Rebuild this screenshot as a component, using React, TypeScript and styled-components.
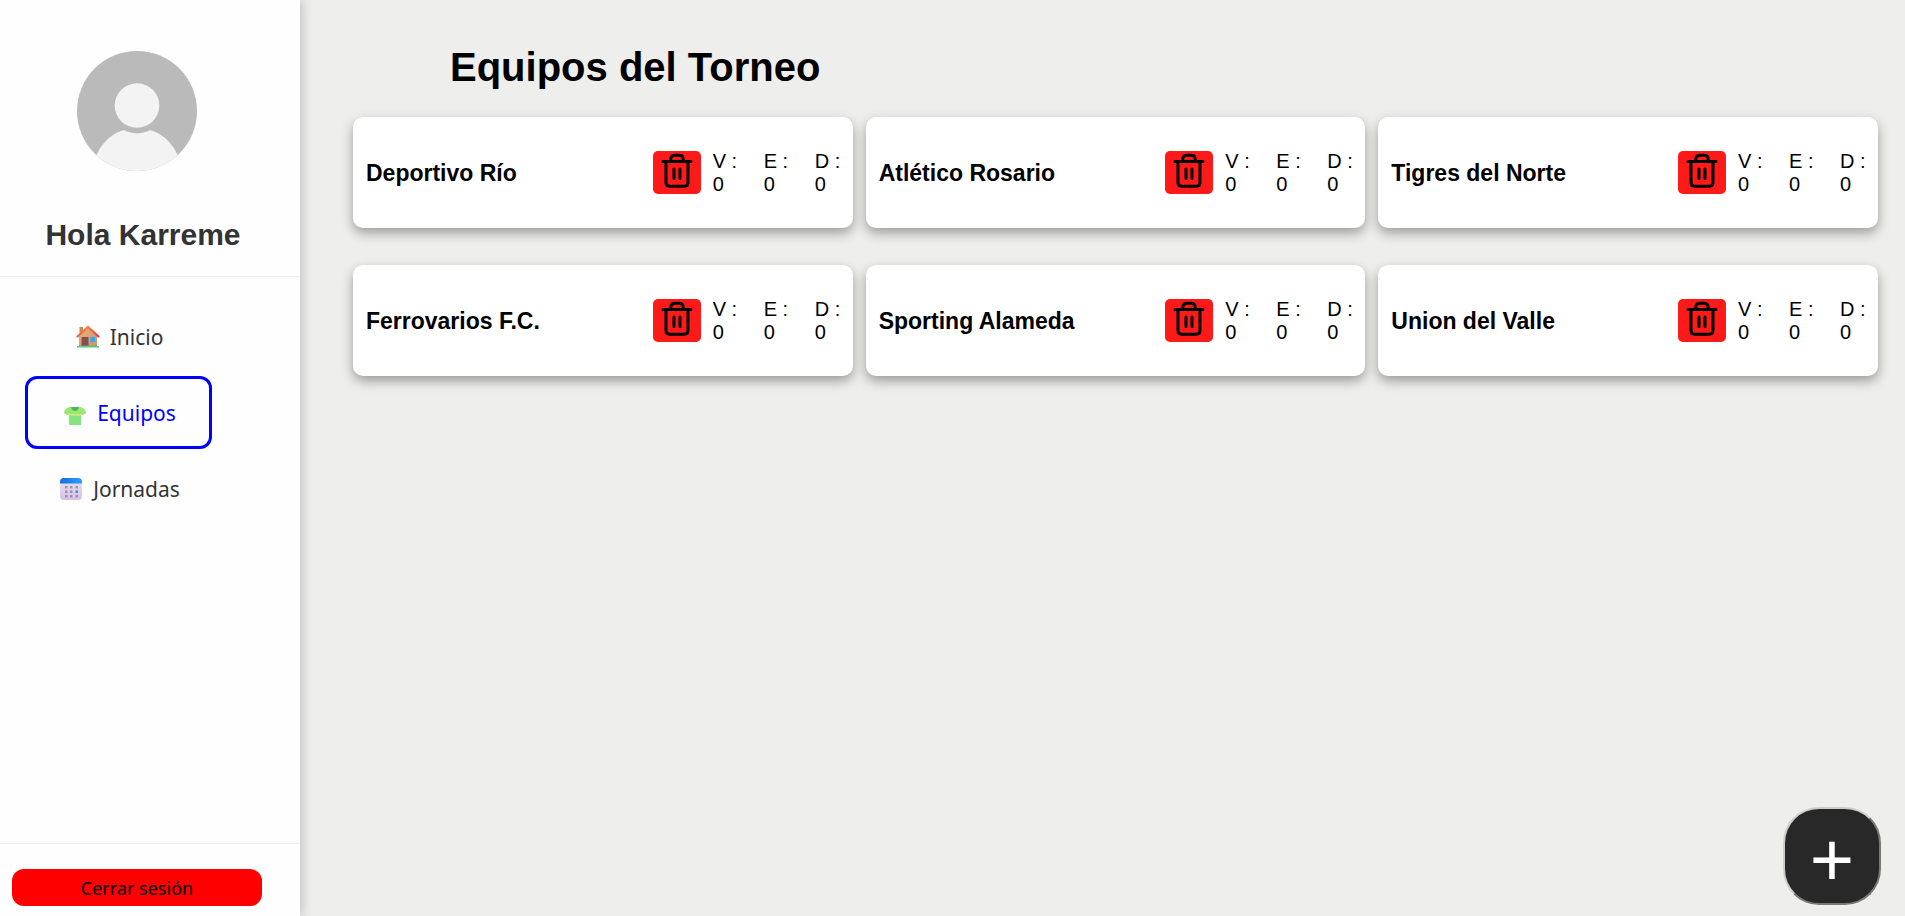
import React from 'react';
import styled, { createGlobalStyle } from 'styled-components';

const GlobalStyle = createGlobalStyle`
  * { box-sizing: border-box; }
  body {
    margin: 0;
    background: #eeeeec;
    font-family: Arial, "Liberation Sans", sans-serif;
    color: #000;
  }
`;

const Layout = styled.div`
  display: flex;
  min-height: 100vh;
`;

const Sidebar = styled.aside`
  display: flex;
  flex-direction: column;
  flex: 0 0 300px;
  background: #fefefe;
  box-shadow: 2px 0 10px rgba(0, 0, 0, 0.2);
  font-family: Tahoma, "Noto Sans", sans-serif;
`;

const Profile = styled.header`
  padding: 51px 26px 24px 0;
  border-bottom: 1px solid #eee;
  text-align: center;
`;

const Avatar = styled.svg`
  display: block;
  width: 120px;
  height: 120px;
  margin: 0 auto 47px;
`;

const Greeting = styled.h2`
  margin: 0;
  padding-left: 12px;
  color: #333;
  font: bold 30px/34px "Liberation Sans", sans-serif;
`;

const Nav = styled.nav`
  display: flex;
  flex-direction: column;
  flex: 1;
  gap: 3px;
  padding: 23px 88px 0 25px;
`;

const NavLink = styled.a<{ $active?: boolean }>`
  display: flex;
  align-items: center;
  justify-content: center;
  gap: 10px;
  height: 73px;
  padding-left: 2px;
  border: 3px solid ${(p) => (p.$active ? '#00f' : 'transparent')};
  border-radius: 12px;
  color: ${(p) => (p.$active ? '#00f' : '#333')};
  font-size: 21px;
  line-height: 28px;
  text-decoration: none;

  svg { width: 24px; height: 24px; }
`;

const Footer = styled.footer`
  padding: 25px 38px 10px 12px;
  border-top: 1px solid #eee;
`;

const LogoutButton = styled.button`
  display: block;
  width: 100%;
  height: 37px;
  padding: 0;
  border: 0;
  border-radius: 12px;
  background: #f00;
  color: #000;
  font: 18px/24px Tahoma, "Noto Sans", sans-serif;
`;

const Main = styled.main`
  flex: 1;
  padding: 44px 27px 0 53px;
`;

const Title = styled.h1`
  margin: 0 0 27px;
  padding-left: 97px;
  font-size: 40px;
  line-height: 46px;
`;

const Grid = styled.div`
  display: grid;
  grid-template-columns: repeat(3, 1fr);
  gap: 37px 13px;
`;

const Card = styled.article`
  display: flex;
  align-items: center;
  height: 111px;
  padding: 0 11px 0 13px;
  border-radius: 10px;
  background: #fff;
  box-shadow: 0 5px 12px rgba(0, 0, 0, 0.35);
`;

const TeamName = styled.h3`
  flex: 1;
  margin: 0;
  font-size: 23px;
  line-height: 28px;
`;

const DeleteButton = styled.button`
  display: flex;
  align-items: flex-start;
  justify-content: center;
  width: 48px;
  height: 43px;
  margin-right: 12px;
  padding: 2px 0 0;
  border: 0;
  border-radius: 5px;
  background: #ff1a1a;

  svg { width: 36px; height: 36px; }
`;

const Stats = styled.div`
  display: flex;
  gap: 24px;
`;

const Stat = styled.span`
  width: 27px;
  font-size: 20px;
  line-height: 23px;
`;

const AddButton = styled.button`
  position: fixed;
  right: 24px;
  bottom: 11px;
  width: 98px;
  height: 98px;
  padding: 8px 0 0;
  border: 2px outset #ccc;
  border-radius: 36px;
  background: #282828;
  color: #fff;
  font: 76px/80px "Liberation Sans", sans-serif;
`;

const TrashIcon = () => (
  <svg viewBox="0 0 36 36" fill="none" stroke="#000" strokeWidth="3" strokeLinecap="round" strokeLinejoin="round" aria-hidden="true">
    <path d="M4 8.500H32M7 8.500V29.500Q7 33.200 10.700 33.200H25.300Q29 33.200 29 29.500V8.500M11.800 8V6.500Q11.800 2.300 16 2.300H20Q24.200 2.300 24.200 6.500V8M15 16V25.500M21 16V25.500" />
  </svg>
);

const HouseIcon = () => (
  <svg viewBox="0 0 24 24" aria-hidden="true">
    <defs>
      <linearGradient id="wall" x2="1" y2="1"><stop stopColor="#edb67a" /><stop offset="1" stopColor="#ca9168" /></linearGradient>
      <linearGradient id="roof" x2="1" y2="1"><stop stopColor="#ff8d4b" /><stop offset="1" stopColor="#df3b42" /></linearGradient>
    </defs>
    <path d="M3.500 2h3.500v8H3.500z" fill="#c58b55" />
    <path d="M3 11 12 2l9 9v10H3z" fill="url(#wall)" />
    <path d="m1.500 11.500 10.500-9.500 10.500 9.500" fill="none" stroke="url(#roof)" strokeWidth="2.200" strokeLinecap="round" />
    <path d="M5.500 12h7v9h-7z" fill="#825052" />
    <path d="M14.500 12h4.500v5h-4.500z" fill="#2aaaf5" />
    <path d="M1 21q11-1 22 0v1.500H1z" fill="#4fca78" />
  </svg>
);

const ShirtIcon = () => (
  <svg viewBox="0 0 24 24" aria-hidden="true">
    <path d="M7 6h10q5 1 6 6l-4 2-1-1v11H6V13l-1 1-4-2q1-5 6-6" fill="#86e47f" />
    <path d="M7 6h10q5 1 6 6l-4 2-1-1H6l-1 1-4-2q1-5 6-6" fill="#9fe66e" />
    <path d="M6 13h12v1.500H6z" fill="#d0ea8a" />
    <path d="M8 6h8q-1 4-4 4T8 6" fill="#49b45b" />
  </svg>
);

const CalendarIcon = () => (
  <svg viewBox="0 0 24 24" aria-hidden="true">
    <defs>
      <linearGradient id="top"><stop stopColor="#1769e0" /><stop offset="1" stopColor="#27a2ff" /></linearGradient>
      <linearGradient id="page" x2="0" y2="1"><stop stopColor="#e9e2f0" /><stop offset="1" stopColor="#d9bfe9" /></linearGradient>
    </defs>
    <rect x="1" y="1" width="22" height="22" rx="4" fill="url(#page)" />
    <path d="M1 6.500V5q0-4 4-4h14q4 0 4 4v1.500z" fill="url(#top)" />
    <path d="M6 9h2.500v2.500H6zm5 0h2.500v2.500H11zm5.500 0H19v2.500h-2.500zM6 13.500h2.500V16H6zm5 0h2.500V16H11zM6 18h2.500v2.500H6zm5 0h2.500v2.500H11zm5.500 0H19v2.500h-2.500z" fill="#9b91a8" />
    <path d="M16.500 13.500H19V16h-2.500z" fill="#1497f2" />
  </svg>
);

const teams = ['Deportivo Río', 'Atlético Rosario', 'Tigres del Norte', 'Ferrovarios F.C.', 'Sporting Alameda', 'Union del Valle'];

export default function App() {
  return (
    <Layout>
      <GlobalStyle />
      <Sidebar>
        <Profile>
          <Avatar viewBox="0 0 120 120" role="img" aria-label="Avatar">
            <clipPath id="avatar"><circle cx="60" cy="60" r="60" /></clipPath>
            <g clipPath="url(#avatar)">
              <path d="M0 0h120v120H0z" fill="#bababa" />
              <circle cx="60" cy="121" r="44" fill="#f3f3f3" />
              <circle cx="60" cy="54.500" r="28" fill="#bababa" />
              <circle cx="60" cy="54.500" r="22.300" fill="#f3f3f3" />
            </g>
          </Avatar>
          <Greeting>Hola Karreme</Greeting>
        </Profile>
        <Nav>
          <NavLink href="#inicio"><HouseIcon />Inicio</NavLink>
          <NavLink href="#equipos" $active><ShirtIcon />Equipos</NavLink>
          <NavLink href="#jornadas"><CalendarIcon />Jornadas</NavLink>
        </Nav>
        <Footer><LogoutButton type="button">Cerrar sesión</LogoutButton></Footer>
      </Sidebar>
      <Main>
        <Title>Equipos del Torneo</Title>
        <Grid>
          {teams.map((team) => (
            <Card key={team}>
              <TeamName>{team}</TeamName>
              <DeleteButton type="button" aria-label={`Eliminar ${team}`}><TrashIcon /></DeleteButton>
              <Stats>
                <Stat>V : 0</Stat>
                <Stat>E : 0</Stat>
                <Stat>D : 0</Stat>
              </Stats>
            </Card>
          ))}
        </Grid>
      </Main>
      <AddButton type="button" aria-label="Agregar equipo">+</AddButton>
    </Layout>
  );
}
